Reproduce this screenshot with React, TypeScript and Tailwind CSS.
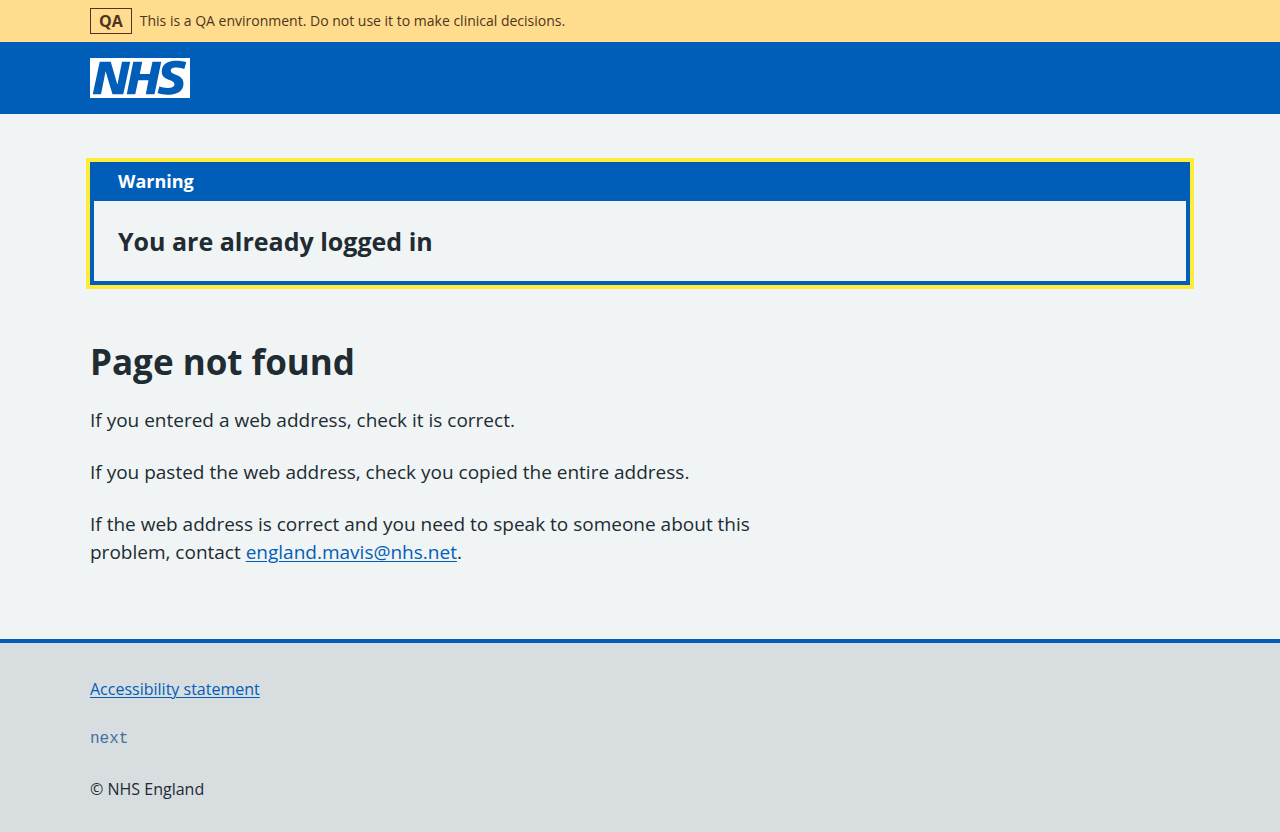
import React from "react";

const CONTAINER = "mx-auto w-full max-w-[1164px] px-8";
const LINK = "text-[#005eb8] underline underline-offset-2 decoration-1";

function NhsLogo() {
  return (
    <svg className="h-10 w-[100px] text-white" viewBox="0 0 200 80" role="img" aria-label="NHS">
      <path
        fill="currentColor"
        d="M200 0v80H0V0h200Zm-27.5 5.5c-14.5 0-29 5-29 22 0 10.2 7.7 13.5 14.7 16.3l.7.3c5.4 2 10.1 3.9 10.1 8.4 0 6.5-8.5 7.5-14 7.5s-12.5-1.5-16-3.5L135 70c5.5 2 13.5 3.5 20 3.5 15.5 0 32-4.5 32-22.5 0-19.5-25.5-16.5-25.5-25.5 0-5.5 5.5-6.5 12.5-6.5a35 35 0 0 1 14.5 3l4-13.5c-4.5-2-12-3-20-3Zm-131 2h-22l-14 65H22l9-45h.5l13.5 45h21.5l14-65H64l-9 45h-.5l-13-45Zm63 0h-18l-13 65h17l6-28H117l-5.5 28H129l13.5-65H125L119.5 32h-20l5-24.5Z"
      />
    </svg>
  );
}

export default function App() {
  return (
    <div className="flex min-h-screen flex-col bg-[#f0f4f5] font-['Open_Sans','Noto_Sans',sans-serif] text-[#212b32]">
      <div className="bg-[#ffdc8e] text-[#4d3520]">
        <div className={`${CONTAINER} flex items-center gap-2 py-2 text-sm`}>
          <strong className="border border-current px-2 text-base leading-6">QA</strong>
          <span>This is a QA environment. Do not use it to make clinical decisions.</span>
        </div>
      </div>
      <header className="bg-[#005eb8]">
        <div className={`${CONTAINER} flex py-4`}>
          <a href="#home" aria-label="NHS home">
            <NhsLogo />
          </a>
        </div>
      </header>
      <main className={`${CONTAINER} pt-12 pb-[49px]`}>
        <section
          role="alert"
          aria-labelledby="banner-title"
          className="mb-14 border-4 border-[#005eb8] outline-4 outline-[#ffeb3b]"
        >
          <h2 id="banner-title" className="bg-[#005eb8] px-6 pb-1 text-lg leading-[31px] font-bold text-white">
            Warning
          </h2>
          <p className="px-6 py-6 text-[25px] leading-8 font-bold">You are already logged in</p>
        </section>
        <div className="max-w-[700px] text-[19px] leading-7">
          <h1 className="mb-6 text-[35px] leading-[41px] font-bold">Page not found</h1>
          <p className="mb-6">If you entered a web address, check it is correct.</p>
          <p className="mb-6">If you pasted the web address, check you copied the entire address.</p>
          <p className="mb-6">
            If the web address is correct and you need to speak to someone about this problem, contact{" "}
            <a className={LINK} href="mailto:england.mavis@nhs.net">
              england.mavis@nhs.net
            </a>
            .
          </p>
        </div>
      </main>
      <footer className="flex-1 border-t-4 border-[#005eb8] bg-[#d8dde0]">
        <div className={`${CONTAINER} flex flex-col items-start gap-[22px] pt-8 text-base leading-7`}>
          <a className={LINK} href="#accessibility">
            Accessibility statement
          </a>
          <code className="font-['Liberation_Mono',monospace] text-[#41719f]">next</code>
          <p>© NHS England</p>
        </div>
      </footer>
    </div>
  );
}
